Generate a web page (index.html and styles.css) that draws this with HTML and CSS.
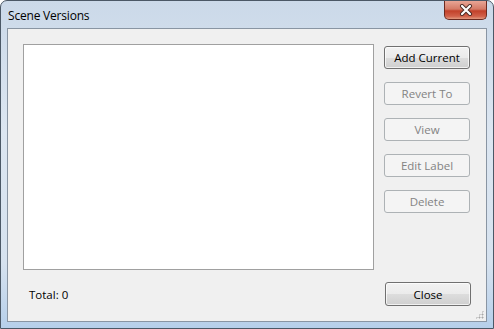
FILE: index.html
```html
<!DOCTYPE html>
<html lang="en">
<head>
  <meta charset="UTF-8">
  <title>Scene Versions</title>
  <link rel="stylesheet" href="styles.css">
</head>
<body>
<div class="window">
  <div class="titlebar">
    <span class="title">Scene Versions</span>
    <div class="close-x">
      <svg width="16" height="12" viewBox="0 0 16 12">
        <path d="M4 2 L12 10 M12 2 L4 10" stroke="#4a2a24" stroke-width="4" stroke-linecap="round"/>
        <path d="M4 2 L12 10 M12 2 L4 10" stroke="#ffffff" stroke-width="2.2" stroke-linecap="round"/>
      </svg>
    </div>
  </div>
  <div class="client">
    <div class="main-row">
      <div class="version-list"></div>
      <div class="actions">
        <button class="btn">Add Current</button>
        <button class="btn" disabled>Revert To</button>
        <button class="btn" disabled>View</button>
        <button class="btn" disabled>Edit Label</button>
        <button class="btn" disabled>Delete</button>
      </div>
    </div>
    <div class="footer">
      <span class="total">Total: 0</span>
      <button class="btn">Close</button>
    </div>
    <div class="grip"></div>
  </div>
</div>
</body>
</html>
```

FILE: styles.css
```css
body {
  margin: 0;
  padding: 0;
  font-family: "Open Sans", "Noto Sans", sans-serif;
  font-size: 12px;
  background: #ffffff;
}
.window {
  width: 494px;
  height: 329px;
  box-sizing: border-box;
  border: 1px solid #4b5866;
  border-radius: 7px 7px 0 0;
  background: linear-gradient(to bottom, #cbd9e9 0%, #dce6f1 40%, #d6e2ef 80%, #b6cfea 100%);
  display: flex;
  flex-direction: column;
}
.titlebar {
  height: 27px;
  display: flex;
  align-items: flex-start;
  justify-content: space-between;
}
.title {
  margin: 6px 0 0 7px;
  font-size: 12px;
  letter-spacing: -0.2px;
  color: #000;
}
.close-x {
  width: 43px;
  height: 19px;
  margin-right: 6px;
  box-sizing: border-box;
  border: 1px solid #6b2a20;
  border-top: none;
  border-radius: 0 0 5px 5px;
  background: linear-gradient(to bottom, #e8a595 0%, #d47a66 45%, #c2412a 55%, #d1614a 85%, #e29a80 100%);
  display: flex;
  align-items: center;
  justify-content: center;
}
.client {
  position: relative;
  flex: 1;
  margin: 0 6px 6px 6px;
  border: 1px solid #8995a3;
  background: #f0f0f0;
  padding: 15px 15px 15px 15px;
  display: flex;
  flex-direction: column;
}
.main-row {
  display: flex;
  gap: 10px;
}
.version-list {
  width: 349px;
  height: 224px;
  background: #fff;
  border: 1px solid #a0a0a0;
}
.actions {
  display: flex;
  flex-direction: column;
  gap: 13px;
  padding-top: 2px;
}
.btn {
  width: 86px;
  height: 23px;
  box-sizing: border-box;
  border: 1px solid #707070;
  border-radius: 3px;
  font-family: "Open Sans", "Noto Sans", sans-serif;
  font-size: 11.5px;
  color: #000;
  padding: 0;
  background: linear-gradient(to bottom, #f2f2f2 0%, #ebebeb 50%, #dddddd 51%, #cfcfcf 100%);
  box-shadow: inset 0 0 0 1px rgba(255, 255, 255, 0.7);
}
.btn:disabled {
  border-color: #adb2b5;
  background: #f4f4f4;
  color: #838383;
  box-shadow: none;
}
.footer {
  margin-top: auto;
  display: flex;
  justify-content: space-between;
  align-items: center;
}
.footer .btn {
  height: 24px;
}
.total {
  margin-left: 6px;
  font-size: 11.5px;
  color: #000;
}
.grip {
  position: absolute;
  right: 2px;
  bottom: 2px;
  width: 9px;
  height: 9px;
  background: radial-gradient(circle, #a8a8a8 0.8px, transparent 1.2px) 0 0 / 3px 3px;
  clip-path: polygon(100% 0, 100% 100%, 0 100%);
}
```
